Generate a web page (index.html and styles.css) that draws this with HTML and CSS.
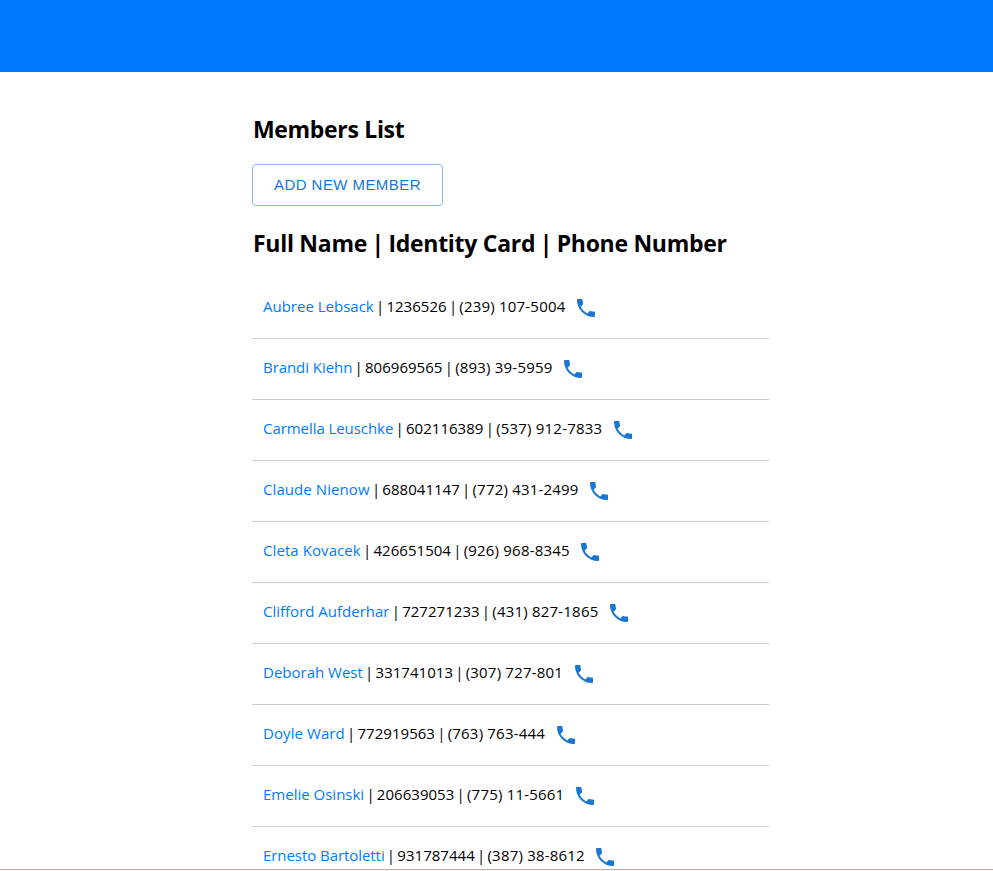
FILE: index.html
```html
<!DOCTYPE html>
<html lang="en">
<head>
<meta charset="utf-8">
<title>Members List</title>
<link rel="stylesheet" href="styles.css">
</head>
<body>
<svg class="sprite" aria-hidden="true"><symbol id="phone" viewBox="0 0 24 24"><path d="M6.62 10.79c1.44 2.83 3.76 5.14 6.59 6.59l2.2-2.2c.27-.27.67-.36 1.02-.24 1.12.37 2.33.57 3.57.57.55 0 1 .45 1 1V20c0 .55-.45 1-1 1-9.39 0-17-7.61-17-17 0-.55.45-1 1-1h3.5c.55 0 1 .45 1 1 0 1.25.2 2.45.57 3.57.11.35.03.74-.25 1.02l-2.2 2.2z"/></symbol></svg>
<header class="topbar"></header>
<main class="content">
<h2 class="title">Members List</h2>
<button class="add" type="button">ADD NEW MEMBER</button>
<h2 class="columns">Full Name <span class="sep">|</span> Identity Card <span class="sep">|</span> Phone Number</h2>
<ul class="members">
<li class="member"><a class="name">Aubree Lebsack</a><span class="bar">|</span><span class="card">1236526</span><span class="bar">|</span><span class="number">(239) 107-5004</span><svg class="phone"><use href="#phone"/></svg></li>
<li class="member"><a class="name tight">Brandi Kiehn</a><span class="bar">|</span><span class="card">806969565</span><span class="bar">|</span><span class="number">(893) 39-5959</span><svg class="phone"><use href="#phone"/></svg></li>
<li class="member"><a class="name tight">Carmella Leuschke</a><span class="bar">|</span><span class="card">602116389</span><span class="bar">|</span><span class="number">(537) 912-7833</span><svg class="phone"><use href="#phone"/></svg></li>
<li class="member"><a class="name loose">Claude Nienow</a><span class="bar">|</span><span class="card">688041147</span><span class="bar">|</span><span class="number">(772) 431-2499</span><svg class="phone"><use href="#phone"/></svg></li>
<li class="member"><a class="name loose">Cleta Kovacek</a><span class="bar">|</span><span class="card">426651504</span><span class="bar">|</span><span class="number">(926) 968-8345</span><svg class="phone"><use href="#phone"/></svg></li>
<li class="member"><a class="name">Clifford Aufderhar</a><span class="bar">|</span><span class="card">727271233</span><span class="bar">|</span><span class="number">(431) 827-1865</span><svg class="phone"><use href="#phone"/></svg></li>
<li class="member"><a class="name">Deborah West</a><span class="bar">|</span><span class="card">331741013</span><span class="bar">|</span><span class="number">(307) 727-801</span><svg class="phone"><use href="#phone"/></svg></li>
<li class="member"><a class="name loose">Doyle Ward</a><span class="bar">|</span><span class="card">772919563</span><span class="bar">|</span><span class="number">(763) 763-444</span><svg class="phone"><use href="#phone"/></svg></li>
<li class="member"><a class="name">Emelie Osinski</a><span class="bar">|</span><span class="card">206639053</span><span class="bar">|</span><span class="number">(775) 11-5661</span><svg class="phone"><use href="#phone"/></svg></li>
<li class="member"><a class="name tight">Ernesto Bartoletti</a><span class="bar">|</span><span class="card">931787444</span><span class="bar">|</span><span class="number">(387) 38-8612</span><svg class="phone"><use href="#phone"/></svg></li>
</ul>
</main>
<div class="edge"></div>
</body>
</html>
```
FILE: styles.css
```css
* { box-sizing: border-box; }
body {
  margin: 0;
  height: 871px;
  overflow: hidden;
  background: #fff;
  color: #000;
  font-family: "Segoe UI", "Open Sans", "Noto Sans", sans-serif;
}
.sprite { display: none; }
.topbar { height: 72px; background: #007bff; }
.content { width: 517px; margin-left: 252px; padding-top: 41px; }
.title, .columns {
  margin: 0;
  padding-left: 1px;
  font-size: 23px;
  line-height: 32px;
  font-weight: 700;
  letter-spacing: -0.33px;
  white-space: nowrap;
}
.columns { margin-top: 21px; letter-spacing: -0.28px; }
.sep { margin: 0 -1.2px; }
.add {
  display: block;
  width: 191px;
  height: 42px;
  margin-top: 19px;
  padding: 0;
  border: 1px solid #8cbaea;
  border-radius: 4px;
  background: #fff;
  color: #1976d2;
  font: 400 15px/24px "Liberation Sans", Arial, sans-serif;
  letter-spacing: 0.43px;
}
.members { margin: 19px 0 0; padding: 0; list-style: none; }
.member {
  display: flex;
  align-items: center;
  height: 61px;
  padding: 0 10px 1px;
  border-bottom: 1px solid #ccc;
  font-size: 15px;
  font-weight: 400;
  line-height: 24px;
  white-space: nowrap;
}
.name, .bar, .card, .number { margin-bottom: 3px; }
.name { margin-left: 1px; color: #007bff; }
.tight { letter-spacing: -0.06px; }
.loose { letter-spacing: 0.08px; }
.bar { width: 12.7px; text-align: center; }
.card { letter-spacing: 0.03px; }
.number { letter-spacing: 0.2px; }
.phone { width: 24px; height: 24px; margin-left: 8.6px; fill: #1976d2; }
.edge {
  position: fixed;
  left: 0;
  right: 0;
  bottom: 0;
  height: 2px;
  border-top: 1px solid #b9b3ae;
  background: #fbeee2;
}
```
